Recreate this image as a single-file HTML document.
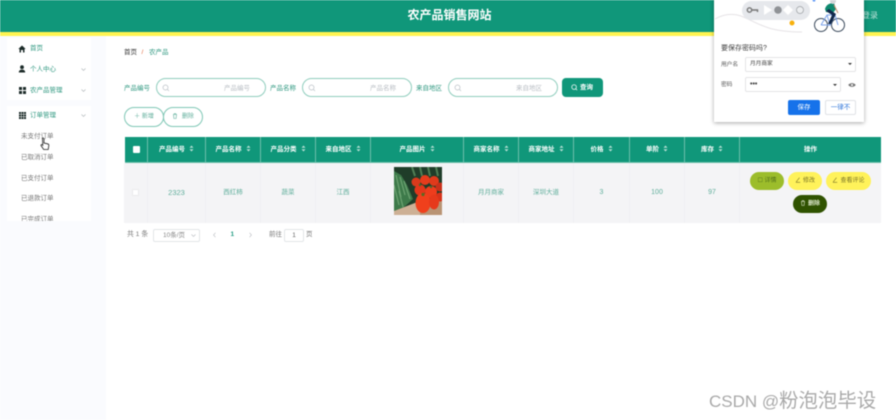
<!DOCTYPE html>
<html><head><meta charset="utf-8">
<style>
*{box-sizing:border-box}
html,body{margin:0;padding:0}
body{width:896px;height:420px;overflow:hidden;background:#fff;position:relative;font-family:"Liberation Sans","Noto Sans CJK SC",sans-serif}
.a{position:absolute;white-space:nowrap}
.wrap{position:absolute;left:0;top:0;width:896px;height:420px;filter:blur(.5px)}
.t{font-size:6.5px;line-height:10px;color:#2f9880}
.inp{position:absolute;top:78px;width:110px;height:19px;border:1px solid #8fcdbd;border-radius:10px;background:#fff}
.inp span{position:absolute;left:67px;top:4.500px;font-size:6.500px;line-height:10px;color:#b9bec4;white-space:nowrap}
.inp svg{position:absolute;left:5px;top:5px}
.th{position:absolute;top:137px;height:26px;background:#10977a;border-right:1px solid #6dbfab;border-bottom:1px solid #6dbfab;color:#fff;font-size:6.500px;font-weight:bold;text-align:center;line-height:25px;white-space:nowrap}
.th svg{margin-left:4px;vertical-align:-1px}
.td{position:absolute;top:163px;height:60px;background:#f4f4f6;border-right:1px solid #efeff2;color:#5fae9b;font-size:7.500px;text-align:center;line-height:59px;white-space:nowrap}
.btn{position:absolute;height:18px;border-radius:9px;font-size:6px;line-height:18px;text-align:center;white-space:nowrap}
.btn svg{vertical-align:-1px;margin-right:2px}
.menu{position:absolute;left:7px;width:84px;background:#fff}
.arr{position:absolute;left:81px;width:5px;height:5px}
</style></head>
<body>
<svg width="0" height="0" style="position:absolute"><defs>
<symbol id="so" viewBox="0 0 5 7"><path d="M2.500 .5L4.500 2.800H.5ZM2.500 6.500L.5 4.200H4.500Z" fill="#b8e0d6"/></symbol>
<symbol id="tr" viewBox="0 0 6 6"><path d="M1 1.500H5M2.200 1.500V.7H3.800V1.500M1.500 1.500L1.900 5.500H4.100L4.500 1.500" fill="none" stroke="currentColor" stroke-width=".6"/></symbol>
<symbol id="ed" viewBox="0 0 6 6"><path d="M4.500 .7L1.500 4.500L1.200 5.300H5.200" fill="none" stroke="currentColor" stroke-width=".6"/></symbol>
</defs></svg>
<div class="wrap">
<div class="a" style="left:0;top:0;width:896px;height:32px;background:#10977a"></div>
<div class="a" style="left:0;top:32px;width:896px;height:4px;background:#fff451"></div>
<div class="a" style="left:0;top:36px;width:106px;height:384px;background:#fafbfe"></div>
<div class="a" style="left:0;top:8px;width:899px;text-align:center;color:#fff;font-size:12px;line-height:15px;font-weight:bold">农产品销售网站</div>
<div class="a" style="left:862px;top:10px;color:#bfe3da;font-size:8px;line-height:11px">登录</div>

<!-- sidebar -->
<div class="menu" style="top:38px;height:62px"></div>
<div class="menu" style="top:106px;height:115px"></div>
<svg class="a" style="left:18px;top:45px" width="8" height="8" viewBox="0 0 8 8"><path d="M4 .5L.3 4H1.500V7.500H3V5H5V7.500H6.500V4H7.700L4 .5Z" fill="#1c2b29"/></svg>
<div class="a t" style="left:30px;top:43.500px">首页</div>
<svg class="a" style="left:18px;top:65px" width="8" height="8" viewBox="0 0 8 8"><circle cx="4" cy="2.200" r="1.900" fill="#1c2b29"/><path d="M.8 7.500C.8 5.500 2 4.600 4 4.600S7.200 5.500 7.200 7.500Z" fill="#1c2b29"/></svg>
<div class="a t" style="left:30px;top:65px">个人中心</div>
<svg class="a" style="left:19px;top:87px" width="7" height="7" viewBox="0 0 7 7"><path d="M0 0H3V3H0ZM4 0H7V3H4ZM0 4H3V7H0ZM4 4H7V7H4Z" fill="#1c2b29"/></svg>
<div class="a t" style="left:30px;top:85.500px">农产品管理</div>
<svg class="a" style="left:19px;top:112px" width="7" height="7" viewBox="0 0 7 7"><path d="M0 0H2V2H0ZM2.500 0H4.500V2H2.500ZM5 0H7V2H5ZM0 2.500H2V4.500H0ZM2.500 2.500H4.500V4.500H2.500ZM5 2.500H7V4.500H5ZM0 5H2V7H0ZM2.500 5H4.500V7H2.500ZM5 5H7V7H5Z" fill="#1c2b29"/></svg>
<div class="a t" style="left:30px;top:111px">订单管理</div>
<svg class="a arr" style="top:67px" viewBox="0 0 5 5"><path d="M.5 1.500L2.500 3.500L4.500 1.500" stroke="#a9b0b4" stroke-width=".6" fill="none"/></svg>
<svg class="a arr" style="top:88px" viewBox="0 0 5 5"><path d="M.5 1.500L2.500 3.500L4.500 1.500" stroke="#a9b0b4" stroke-width=".6" fill="none"/></svg>
<svg class="a arr" style="top:113px" viewBox="0 0 5 5"><path d="M.5 1.500L2.500 3.500L4.500 1.500" stroke="#a9b0b4" stroke-width=".6" fill="none"/></svg>
<div class="a t" style="left:21px;top:132px;color:#777">未支付订单</div>
<div class="a t" style="left:21px;top:153px;color:#777">已取消订单</div>
<div class="a t" style="left:21px;top:174px;color:#777">已支付订单</div>
<div class="a t" style="left:21px;top:194px;color:#777">已退款订单</div>
<div class="a" style="left:21px;top:215px;height:6px;overflow:hidden;font-size:6.500px;line-height:10px;color:#777">已完成订单</div>
<svg class="a" style="left:40px;top:137px" width="10" height="14" viewBox="0 0 10 14"><path d="M2.500 1.500C3.200.8 4 1.200 4 2V6L7.500 6.800C8.500 7 9 7.700 8.800 8.800L8.200 12.500H3.700L1 8.500C.7 7.800 1.500 7.200 2.300 7.800L2.800 8.300Z" fill="#fff" stroke="#222" stroke-width=".8"/></svg>

<!-- breadcrumb -->
<div class="a t" style="left:124px;top:48px;color:#333">首页</div>
<div class="a t" style="left:141.500px;top:48px;color:#e0673c">/</div>
<div class="a t" style="left:149px;top:48px;color:#2f9880">农产品</div>

<!-- search -->
<div class="a t" style="left:124px;top:84px">产品编号</div>
<div class="inp" style="left:156px"><svg width="8" height="8" viewBox="0 0 8 8"><circle cx="3.500" cy="3.500" r="2.500" fill="none" stroke="#bcc2c8" stroke-width=".7"/><path d="M5.400 5.400L7 7" stroke="#bcc2c8" stroke-width=".7"/></svg><span>产品编号</span></div>
<div class="a t" style="left:270px;top:84px">产品名称</div>
<div class="inp" style="left:302px"><svg width="8" height="8" viewBox="0 0 8 8"><circle cx="3.500" cy="3.500" r="2.500" fill="none" stroke="#bcc2c8" stroke-width=".7"/><path d="M5.400 5.400L7 7" stroke="#bcc2c8" stroke-width=".7"/></svg><span>产品名称</span></div>
<div class="a t" style="left:416px;top:84px">来自地区</div>
<div class="inp" style="left:448px"><svg width="8" height="8" viewBox="0 0 8 8"><circle cx="3.500" cy="3.500" r="2.500" fill="none" stroke="#bcc2c8" stroke-width=".7"/><path d="M5.400 5.400L7 7" stroke="#bcc2c8" stroke-width=".7"/></svg><span>来自地区</span></div>
<div class="a" style="left:562px;top:78px;width:41px;height:19px;background:#10977a;border-radius:4px;color:#fff;font-size:6.500px;line-height:19px;padding-left:18px;font-weight:bold">查询</div>
<svg class="a" style="left:571px;top:84px" width="7" height="7" viewBox="0 0 8 8"><circle cx="3.500" cy="3.500" r="2.600" fill="none" stroke="#fff" stroke-width=".9"/><path d="M5.400 5.400L7 7" stroke="#fff" stroke-width=".9"/></svg>

<div class="btn" style="left:124px;top:107px;width:40px;height:20px;border-radius:10px;border:1px solid #7fc7b5;background:#fff;color:#5fae9b;line-height:18px">＋ 新增</div>
<div class="btn" style="left:163px;top:107px;width:40px;height:20px;border-radius:10px;border:1px solid #7fc7b5;background:#fff;color:#5fae9b;line-height:18px"><svg width="6" height="6"><use href="#tr"/></svg> 删除</div>

<!-- table head -->
<div class="th" style="left:125px;width:23px"></div>
<div class="a" style="left:133px;top:146px;width:7px;height:7px;background:#fff;border-radius:1px"></div>
<div class="th" style="left:148px;width:58px">产品编号<svg width="5" height="7"><use href="#so"/></svg></div>
<div class="th" style="left:206px;width:55px">产品名称<svg width="5" height="7"><use href="#so"/></svg></div>
<div class="th" style="left:261px;width:55px">产品分类<svg width="5" height="7"><use href="#so"/></svg></div>
<div class="th" style="left:316px;width:55px">来自地区<svg width="5" height="7"><use href="#so"/></svg></div>
<div class="th" style="left:371px;width:93px">产品图片<svg width="5" height="7"><use href="#so"/></svg></div>
<div class="th" style="left:464px;width:55px">商家名称<svg width="5" height="7"><use href="#so"/></svg></div>
<div class="th" style="left:519px;width:55px">商家地址<svg width="5" height="7"><use href="#so"/></svg></div>
<div class="th" style="left:574px;width:56px">价格<svg width="5" height="7"><use href="#so"/></svg></div>
<div class="th" style="left:630px;width:55px">单阶<svg width="5" height="7"><use href="#so"/></svg></div>
<div class="th" style="left:685px;width:55px">库存<svg width="5" height="7"><use href="#so"/></svg></div>
<div class="th" style="left:740px;width:141px;border-right:0">操作</div>

<!-- table row -->
<div class="td" style="left:124px;width:24px"></div>
<div class="a" style="left:132px;top:189px;width:7px;height:7px;background:#fff;border:1px solid #eaeaec;border-radius:1px"></div>
<div class="td" style="left:148px;width:58px">2323</div>
<div class="td" style="left:206px;width:55px;font-size:6.500px">西红柿</div>
<div class="td" style="left:261px;width:55px;font-size:6.500px">蔬菜</div>
<div class="td" style="left:316px;width:55px;font-size:6.500px">江西</div>
<div class="td" style="left:371px;width:93px"></div>
<div class="td" style="left:464px;width:55px;font-size:6.500px">月月商家</div>
<div class="td" style="left:519px;width:55px;font-size:6.500px">深圳大道</div>
<div class="td" style="left:574px;width:56px;font-size:7px">3</div>
<div class="td" style="left:630px;width:55px;font-size:7px">100</div>
<div class="td" style="left:685px;width:55px;font-size:7px">97</div>
<div class="td" style="left:740px;width:141px;border-right:0"></div>

<svg class="a" style="left:394px;top:167px" width="48" height="48" viewBox="0 0 48 48">
<rect width="48" height="48" fill="#1f3d29"/>
<path d="M18 0L21 9M26 0L28 9M34 0L36 9M42 0L44 9" stroke="#4f7f55" stroke-width="2"/>
<path d="M0 4L7 8 13 18 19 32 9 41 0 44Z" fill="#3d7a4a"/>
<path d="M2 8L7 30M6 10L11 28M10 14L16 32M0 18L5 38M5 24L9 40" stroke="#6da372" stroke-width="1.200"/>
<path d="M0 44L26 34 26 48 0 48Z" fill="#cdb095"/>
<path d="M26 36L48 30 48 48 26 48Z" fill="#b99474"/>
<circle cx="22" cy="15" r="4.500" fill="#d93a1c"/><circle cx="31" cy="13" r="5" fill="#e63c1c"/><circle cx="40" cy="14" r="5" fill="#e03a1b"/><circle cx="46" cy="20" r="4.500" fill="#c9301a"/>
<circle cx="26" cy="23" r="5.500" fill="#e2371b"/><circle cx="37" cy="25" r="6" fill="#ee3d1d"/><circle cx="46" cy="30" r="4.500" fill="#d8331a"/>
<ellipse cx="29" cy="36" rx="7.500" ry="10" fill="#f0401c"/><ellipse cx="40" cy="35" rx="5" ry="7.500" fill="#e6391b"/>
<circle cx="29" cy="27.500" r="1.600" fill="#5a6a20"/><circle cx="26" cy="18" r="1.200" fill="#4a6a2a"/><circle cx="37" cy="20" r="1.200" fill="#4a6a2a"/>
</svg>

<div class="btn" style="left:750px;top:172px;width:34px;background:#9cbd2b;color:#51701a">☐ 详情</div>
<div class="btn" style="left:788px;top:172px;width:34px;background:#fff25a;color:#7a7428"><svg width="6" height="6"><use href="#ed"/></svg>修改</div>
<div class="btn" style="left:826px;top:172px;width:45px;background:#fff25a;color:#7a7428"><svg width="6" height="6"><use href="#ed"/></svg>查看评论</div>
<div class="btn" style="left:793px;top:195px;width:34px;background:#2f5200;color:#dbe6c8;font-weight:bold"><svg width="6" height="6"><use href="#tr"/></svg>删除</div>

<!-- pagination -->
<div class="a t" style="left:127px;top:230px;color:#777;font-size:6.800px">共 1 条</div>
<div class="a" style="left:153px;top:229px;width:47px;height:13px;border:1px solid #e3e5e8;border-radius:2px;font-size:6.500px;line-height:11px;color:#888;padding-left:9px">10条/页</div>
<svg class="a" style="left:191px;top:233px" width="5" height="5" viewBox="0 0 5 5"><path d="M.5 1.500L2.500 3.500L4.500 1.500" stroke="#b5b8bd" stroke-width=".6" fill="none"/></svg>
<svg class="a" style="left:212px;top:232px" width="5" height="6" viewBox="0 0 5 6"><path d="M3.500 .8L1.500 3L3.500 5.200" stroke="#b8bbc0" stroke-width=".6" fill="none"/></svg>
<div class="a t" style="left:230.500px;top:230px;color:#1f9a80;font-weight:bold">1</div>
<svg class="a" style="left:248px;top:232px" width="5" height="6" viewBox="0 0 5 6"><path d="M1.500 .8L3.500 3L1.500 5.200" stroke="#b8bbc0" stroke-width=".6" fill="none"/></svg>
<div class="a t" style="left:269px;top:230px;color:#777">前往</div>
<div class="a" style="left:284px;top:229px;width:20px;height:13px;border:1px solid #e3e5e8;border-radius:2px;font-size:6.500px;line-height:11px;color:#666;text-align:center">1</div>
<div class="a t" style="left:306px;top:230px;color:#777">页</div>

<!-- password popup -->
<div class="a" style="left:714px;top:-2px;width:150px;height:124px;background:#fff;box-shadow:0 1px 4px rgba(0,0,0,.35)"></div>
<svg class="a" style="left:714px;top:0" width="150" height="38" viewBox="0 0 150 38">
<path d="M1 19C10 14 18 13 27 16C45 23 52 32 88 32" stroke="#e6e3e6" fill="none"/>
<rect x="28" y="1" width="68" height="19" rx="9.500" fill="#e6e8ec"/>
<circle cx="35.500" cy="10" r="2.200" fill="none" stroke="#777" stroke-width="1.400"/><path d="M37.500 10H43.500V12" stroke="#777" stroke-width="1.400" fill="none"/>
<path d="M50 5L58 10 50 15Z" fill="#fff"/>
<circle cx="64" cy="10" r="3.800" fill="#8f9296"/>
<path d="M74 5L79 10 74 15 69 10Z" fill="#fff"/>
<circle cx="86" cy="10" r="3.500" fill="#eceef0" stroke="#9a9da1" stroke-width=".7"/>
<circle cx="78" cy="23" r="2.500" fill="#f8b00c"/>
<circle cx="100" cy="0" r="1.500" fill="#4285f4"/>
<circle cx="107" cy="25" r="6.500" fill="none" stroke="#3b4a5c" stroke-width="1"/>
<circle cx="124" cy="25" r="6.500" fill="none" stroke="#3b4a5c" stroke-width="1"/>
<path d="M107 25L113 15 121 15 124 25M113 15L116 25 121 15M116 25H107" stroke="#7aa2ea" stroke-width="1" fill="none"/>
<path d="M111 9C112 5 115 3 120 3L122 9 119 13 112 12Z" fill="#0f8a6f"/>
<path d="M112 11L118 15 114 24 117 24 122 14 115 9Z" fill="#13294b"/>
<path d="M120 5L124 13" stroke="#c98a6a" stroke-width="1"/>
<circle cx="119" cy="1" r="3" fill="#d5d7da"/>
</svg>
<div class="a" style="left:721px;top:43px;font-size:7px;line-height:11px;color:#444">要保存密码吗?</div>
<div class="a" style="left:721px;top:60px;font-size:5.700px;line-height:10px;color:#555">用户名</div>
<div class="a" style="left:745px;top:57px;width:111px;height:15px;border:1px solid #e4e4e6;border-radius:2px;font-size:5.700px;line-height:13px;color:#444;padding-left:4px">月月商家</div>
<div class="a" style="left:848px;top:63px;width:0;height:0;border:2px solid transparent;border-top:2.500px solid #333"></div>
<div class="a" style="left:721px;top:80px;font-size:5.700px;line-height:10px;color:#555">密码</div>
<div class="a" style="left:745px;top:77px;width:96px;height:15px;border:1px solid #e4e4e6;border-radius:2px;font-size:7px;line-height:13px;color:#444;padding-left:4px;font-weight:bold">•••</div>
<div class="a" style="left:833px;top:84px;width:0;height:0;border:2px solid transparent;border-top:2.500px solid #333"></div>
<svg class="a" style="left:848px;top:82px" width="8" height="6" viewBox="0 0 8 6"><path d="M.3 3C2 .5 6 .5 7.700 3 6 5.500 2 5.500 .3 3Z" fill="#777"/><circle cx="4" cy="3" r="1" fill="#fff"/></svg>
<div class="a" style="left:788px;top:100px;width:32px;height:15px;background:#1672ea;border-radius:2px;color:#fff;font-size:6.500px;line-height:15px;text-align:center">保存</div>
<div class="a" style="left:825px;top:100px;width:31px;height:15px;border:1px solid #e0e2e6;border-radius:2px;color:#2a72d8;font-size:6.500px;line-height:13px;text-align:center">一律不</div>

<!-- watermark -->
<div class="a" style="left:709px;top:390px;font-size:17px;line-height:22px;color:#a9a9a9">CSDN @<span style="font-size:19.400px">粉泡泡毕设</span></div>
</div>
</body></html>
